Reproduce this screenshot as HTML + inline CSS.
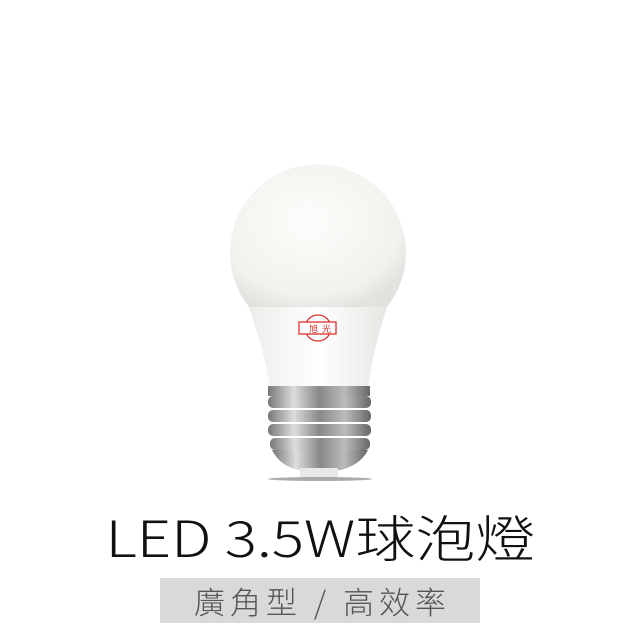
<!DOCTYPE html>
<html><head><meta charset="utf-8"><style>
body{margin:0;width:640px;height:640px;background:#fff;position:relative;overflow:hidden;font-family:"Liberation Sans","Noto Sans CJK TC",sans-serif}
.t{position:absolute;left:0;width:640px;top:500px;text-align:center;font-size:50px;font-weight:300;color:#111;font-family:"Noto Sans CJK TC",sans-serif;transform:scaleX(1.2);transform-origin:318px 0}
.box{position:absolute;left:160px;top:578px;width:320px;height:45px;background:#d9d9d9}
.s{position:absolute;left:160px;width:320px;top:578px;line-height:45px;text-align:center;font-size:31px;color:#555;font-family:"Noto Sans CJK TC",sans-serif;font-weight:300;letter-spacing:5px;text-indent:5px}
</style></head><body>
<svg width="640" height="500" style="position:absolute;left:0;top:0">
<defs>
<radialGradient id="g" cx="0.45" cy="0.4" r="0.65"><stop offset="0" stop-color="#fdfdfb"/><stop offset="0.8" stop-color="#f1f1ee"/><stop offset="1" stop-color="#e2e2de"/></radialGradient>
<linearGradient id="m" x1="0" x2="1"><stop offset="0" stop-color="#777"/><stop offset="0.25" stop-color="#ddd"/><stop offset="0.5" stop-color="#888"/><stop offset="0.75" stop-color="#bbb"/><stop offset="1" stop-color="#666"/></linearGradient>
<linearGradient id="w" x1="0" x2="1"><stop offset="0" stop-color="#ececea"/><stop offset="0.5" stop-color="#fff"/><stop offset="1" stop-color="#e6e6e3"/></linearGradient>
</defs>
<path d="M249 307 A88 88 0 1 1 387 307 Z" fill="url(#g)"/>
<path d="M249 307 L387 307 C378 335 372 360 368 388 L270 388 C266 360 258 335 249 307 Z" fill="url(#w)"/>
<rect x="268" y="386" width="102" height="10" fill="url(#m)"/>
<g fill="url(#m)">
<rect x="268" y="396" width="103" height="12" rx="5"/>
<rect x="268" y="410" width="103" height="12" rx="5"/>
<rect x="268" y="424" width="103" height="12" rx="5"/>
<rect x="270" y="438" width="100" height="12" rx="5"/>
<path d="M272 450 L368 450 C362 462 350 468 340 470 L300 470 C288 468 278 462 272 450Z"/>
</g>
<rect x="300" y="468" width="38" height="9" fill="#e8e8e6"/>
<ellipse cx="320" cy="479" rx="52" ry="2" fill="#555" opacity="0.5"/>
<g stroke="#d9302b" fill="none" stroke-width="1.3">
<circle cx="318" cy="328" r="13"/>
<rect x="299" y="322" width="37" height="12" fill="#fff"/>
</g>
<text x="309" y="332" font-size="9" fill="#d9302b" font-family="Noto Sans CJK TC">旭</text>
<text x="322" y="332" font-size="9" fill="#d9302b" font-family="Noto Sans CJK TC">光</text>
</svg>
<div class="t">LED 3.5W球泡燈</div>
<div class="box"></div>
<div class="s">廣角型 / 高效率</div>
</body></html>
